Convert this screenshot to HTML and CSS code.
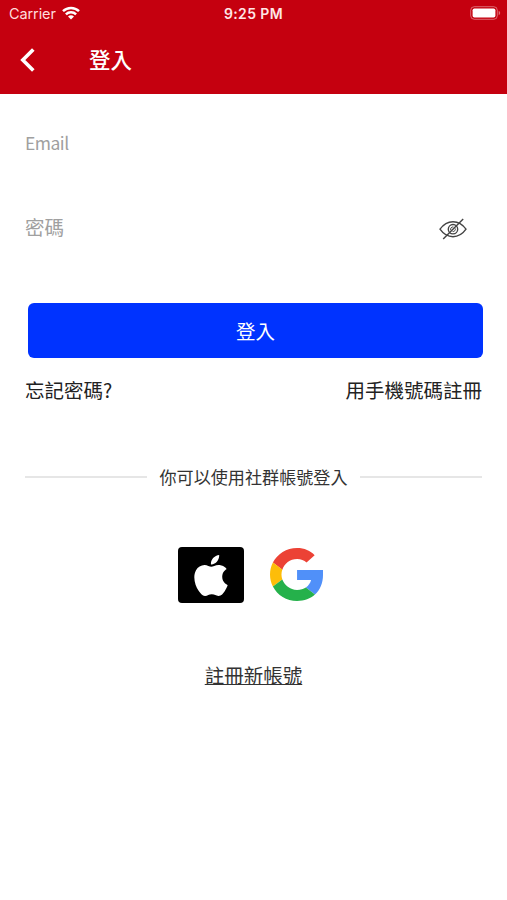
FILE: index.html
```
<!DOCTYPE html>
<html lang="zh-Hant">
<head>
  <meta charset="UTF-8">
  <title>登入</title>
  <meta name="viewport" content="width=device-width, initial-scale=1">
  <link rel="stylesheet" href="styles.css">
</head>
<body>
  <header>
    <div class="status-bar">
      <div class="carrier">
        <span>Carrier</span>
        <svg class="wifi" viewBox="0 0 18 14">
          <path d="M1 5.2a11.5 11.5 0 0 1 16 0M3.9 8.3a7.4 7.4 0 0 1 10.2 0" fill="none" stroke="#fff" stroke-width="2.5"/>
          <path d="M9 13.6 6 10.6a4.3 4.3 0 0 1 6 0z" fill="#fff"/>
        </svg>
      </div>
      <div class="time">9:25 PM</div>
      <svg class="battery" viewBox="0 0 31 14">
        <rect x=".7" y=".7" width="26.6" height="12.6" rx="3.6" fill="none" stroke="#fff" stroke-opacity=".4"/>
        <rect x="2.6" y="2.5" width="22.8" height="9" rx="1.8" fill="#fff"/>
        <path d="M28.7 4.8c2 .8 2 3.6 0 4.4z" fill="#fff" fill-opacity=".45"/>
      </svg>
    </div>
    <div class="nav">
      <a href="#" class="back" aria-label="返回">
        <svg viewBox="0 0 15 24"><path d="M13.300 1.500 2.800 12l10.500 10.500" fill="none" stroke="#fff" stroke-width="3.600"/></svg>
      </a>
      <h1>登入</h1>
    </div>
  </header>

  <main>
    <form id="loginForm">
      <div class="field">
        <input class="email" type="email" placeholder="Email">
      </div>
      <div class="field password">
        <input type="password" placeholder="密碼">
        <svg class="eye" viewBox="0 0 28 22" fill="none" stroke="#444" stroke-width="1.4">
          <path d="M1 11.2C4.500 6.200 9 3.700 14 3.700s9.500 2.500 13 7.500c-3.500 5-8 7.500-13 7.500S4.500 16.200 1 11.200z"/>
          <circle cx="14" cy="11.200" r="4.700"/>
          <path d="M11.800 12.200a2.300 2.300 0 0 1 2.600-3.200M16.200 10.400a2.300 2.300 0 0 1-2.600 3.100" stroke-width="1"/>
          <path d="M4.200 21 24.200 1"/>
        </svg>
      </div>
      <button type="submit">登入</button>
    </form>

    <div class="links">
      <a href="#">忘記密碼?</a>
      <a href="#">用手機號碼註冊</a>
    </div>

    <div class="divider">你可以使用社群帳號登入</div>

    <div class="social">
      <a href="#" class="apple" aria-label="Apple">
        <svg viewBox="2.2 0 19.6 24" fill="#fff">
          <path d="M12.152 6.896c-.948 0-2.415-1.078-3.96-1.04-2.04.027-3.91 1.183-4.961 3.014-2.117 3.675-.546 9.103 1.519 12.09 1.013 1.454 2.208 3.09 3.792 3.039 1.52-.065 2.09-.987 3.935-.987 1.831 0 2.35.987 3.96.948 1.637-.026 2.676-1.48 3.676-2.948 1.156-1.688 1.636-3.325 1.662-3.415-.039-.013-3.182-1.221-3.22-4.857-.026-3.04 2.48-4.494 2.597-4.559-1.429-2.09-3.623-2.324-4.39-2.376-2-.156-3.675 1.09-4.61 1.09zM15.53 3.83c.843-1.012 1.4-2.427 1.245-3.83-1.207.052-2.662.805-3.532 1.818-.78.896-1.454 2.338-1.273 3.714 1.338.104 2.715-.688 3.559-1.701"/>
        </svg>
      </a>
      <a href="#" class="google" aria-label="Google">
        <svg viewBox="0 0 47 48" preserveAspectRatio="none">
          <path fill="#EC4235" d="M24 10c3.540 0 6.210 1.220 8.400 3.200l7.200-6.700C35.900 2.380 30.470 0 24 0 14.620 0 6.510 5.380 2.560 13.220l8.400 6.400C12.600 14.200 17.740 10 24 10z"/>
          <path fill="#5090F9" d="M47 24.550c0-1.570 0-3.090 0-4.550H24v9.020h12.400c-.580 2.660-2.160 4.980-4.580 6.780l8.070 6.400c4.510-4.180 7.110-10.360 7.110-17.650z"/>
          <path fill="#FDBD09" d="M10.930 28.590c-.480-1.450-.760-2.990-.760-4.590s.270-3.140.760-4.590l-8.370-6.190C.920 16.460 0 20.120 0 24c0 3.880.920 7.540 2.560 10.780l8.370-6.190z"/>
          <path fill="#25B14B" d="M24 48c6.480 0 11.930-2.130 15.890-5.810l-8.070-6.390c-2.150 1.450-4.580 2.200-7.820 2.200-6.260 0-11.170-4.220-13.070-9.410l-8.370 6.190C6.510 42.620 14.620 48 24 48z"/>
        </svg>
      </a>
    </div>

    <a href="#" class="register">註冊新帳號</a>
  </main>
</body>
</html>
```

FILE: styles.css
```
* {
  box-sizing: border-box;
}
body {
  margin: 0;
  min-height: 900px;
  background: #fff;
  color: #222;
  font-family: 'Noto Sans CJK TC', sans-serif;
  font-size: 19.5px;
}
a {
  color: inherit;
  text-decoration: none;
}
svg {
  display: block;
}
header {
  height: 94px;
  background: #c5000f;
  color: #fff;
}
.status-bar {
  display: grid;
  grid-template-columns: 1fr auto 1fr;
  align-items: center;
  height: 27px;
  padding: 0 6px 0 8px;
  font-family: Inter, sans-serif;
  font-size: 14.5px;
}
.carrier {
  display: flex;
  align-items: center;
  gap: 6px;
  padding-left: 1px;
  color: #ffdcdc;
}
.carrier span {
  letter-spacing: -0.1px;
}
.wifi {
  width: 18px;
  height: 14px;
  margin-top: -2px;
}
.time {
  padding-right: 2px;
  font-size: 14px;
  font-weight: 600;
  letter-spacing: 0.4px;
  color: #ffe6e6;
}
.battery {
  width: 31px;
  height: 14px;
  margin-top: -1px;
  justify-self: end;
}
.nav {
  display: flex;
  align-items: center;
  height: 65px;
  padding-left: 20px;
}
.back svg {
  width: 15px;
  height: 24px;
}
h1 {
  margin: -2px 0 0 54px;
  font-size: 21.5px;
  font-weight: 500;
}
main {
  padding: 23px 25px 0;
}
.field {
  display: flex;
  align-items: center;
  height: 50px;
}
.password {
  margin-top: 34px;
  padding-right: 15px;
}
input {
  flex: 1;
  min-width: 0;
  padding: 0;
  border: none;
  outline: none;
  font: inherit;
}
.email {
  font-size: 17.5px;
  letter-spacing: -0.5px;
}
input::placeholder {
  color: #a0a0a0;
}
.eye {
  width: 28px;
  height: 22px;
  margin-top: 5px;
}
button {
  display: block;
  width: 455px;
  height: 55px;
  margin: 52px 0 0 3px;
  border: none;
  border-radius: 6px;
  background: #0033ff;
  color: #fff;
  font: inherit;
  cursor: pointer;
}
.links {
  display: flex;
  justify-content: space-between;
  margin-top: 17px;
  line-height: 30px;
}
.divider {
  display: flex;
  align-items: center;
  gap: 12px;
  margin-top: 57px;
  font-size: 17.1px;
  line-height: 30px;
  color: #333;
}
.divider::before,
.divider::after {
  content: "";
  flex: 1;
  height: 2px;
  background: #e6e6e6;
}
.social {
  display: flex;
  justify-content: center;
  align-items: center;
  gap: 26px;
  margin-top: 55px;
  padding-right: 6px;
}
.apple {
  display: flex;
  justify-content: center;
  align-items: center;
  width: 66px;
  height: 56px;
  border-radius: 4px;
  background: #000;
}
.apple svg {
  width: 34px;
  height: 41px;
}
.google svg {
  width: 53px;
  height: 53px;
  margin-top: -1px;
}
.register {
  display: block;
  width: max-content;
  margin: 57px auto 0;
  line-height: 30px;
  color: #333;
  text-decoration: underline;
}
```
